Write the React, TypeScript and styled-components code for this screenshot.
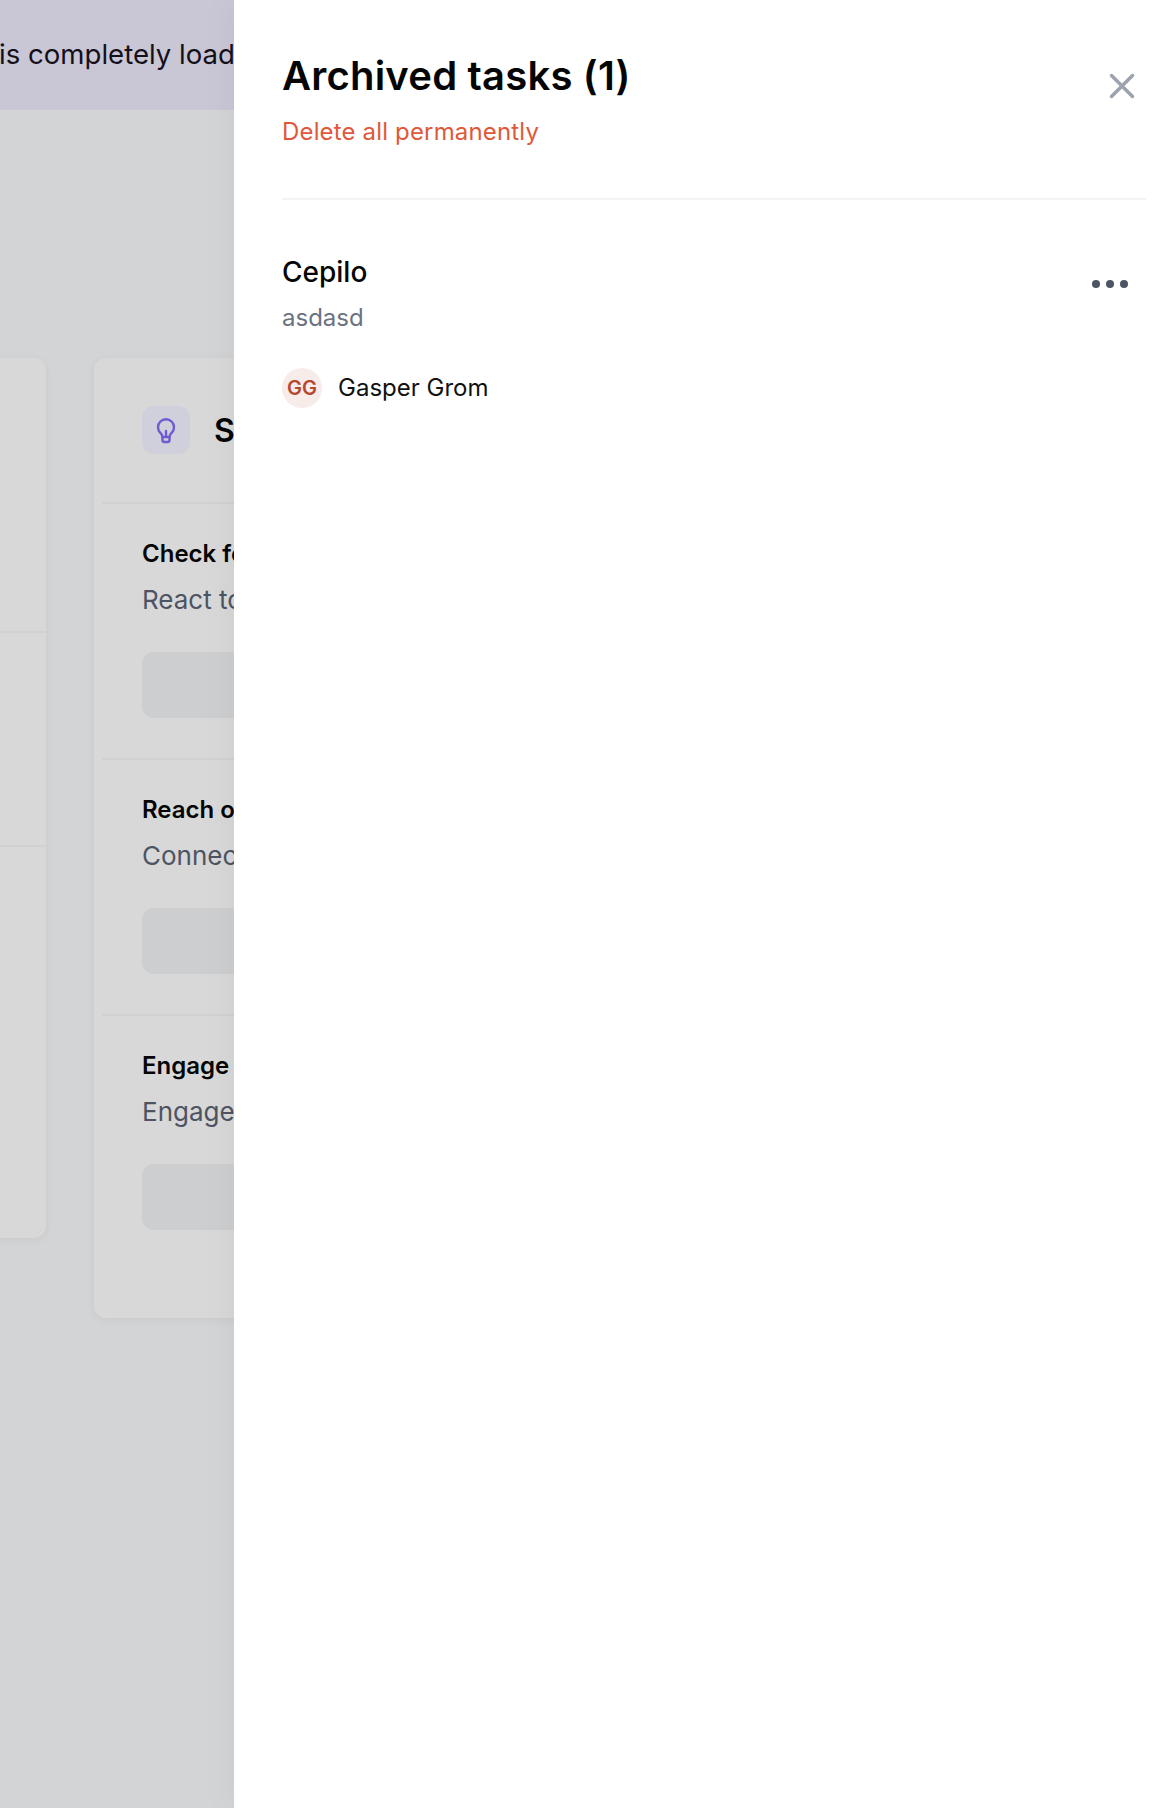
import React from 'react'
import styled, { createGlobalStyle } from 'styled-components'

const GlobalStyle = createGlobalStyle`
  html, body {
    margin: 0;
    padding: 0;
    background: #d3d4d6;
    font-family: "Inter", "Liberation Sans", sans-serif;
  }
  * {
    box-sizing: border-box;
  }
`

const Screen = styled.div`
  display: flex;
  width: 1176px;
  height: 1808px;
  overflow: hidden;
`

const Backdrop = styled.div`
  flex: 0 0 234px;
  height: 100%;
  overflow: hidden;
  background: #d3d4d6;
`

const Banner = styled.div`
  display: flex;
  align-items: center;
  height: 110px;
  padding-bottom: 2px;
  background: #c9c6d6;
  color: #14101a;
  font-size: 27.6px;
  white-space: nowrap;
  overflow: hidden;
`

const BannerText = styled.span`
  margin-left: -1px;
`

const Cards = styled.div`
  display: flex;
  gap: 48px;
  align-items: flex-start;
  margin: 248px 0 0 -254px;
`

const Card = styled.div<{ $height: number; $width: number }>`
  flex: 0 0 ${p => p.$width}px;
  height: ${p => p.$height}px;
  background: #d8d8d8;
  border-radius: 12px;
  box-shadow: 0 2px 10px rgba(0, 0, 0, 0.05);
`

const BlankSection = styled.div<{ $height: number }>`
  height: ${p => p.$height}px;
  border-bottom: 2px solid #d0d1d2;
`

const CardHead = styled.div`
  display: flex;
  align-items: center;
  gap: 24px;
  height: 144px;
  padding: 0 48px;
  white-space: nowrap;
`

const IconBox = styled.div`
  display: flex;
  flex: 0 0 48px;
  align-items: center;
  justify-content: center;
  height: 48px;
  border-radius: 12px;
  background: #d0cfdc;
  color: #6e5bd0;
`

const CardTitle = styled.div`
  color: #050505;
  font-size: 32px;
  font-weight: 600;
`

const Divider = styled.div`
  height: 2px;
  margin: 0 0 0 8px;
  background: #d0d1d2;
`

const Tip = styled.div`
  height: 254px;
  padding: 34px 48px 0;
  white-space: nowrap;
`

const TipTitle = styled.div`
  color: #050505;
  font-size: 24px;
  font-weight: 600;
  line-height: 32px;
`

const TipText = styled.div`
  margin-top: 13px;
  color: #4c5463;
  font-size: 26px;
  line-height: 34px;
`

const TipButton = styled.div`
  height: 66px;
  margin-top: 35px;
  border-radius: 12px;
  background: #cdced0;
`

const Drawer = styled.aside`
  position: relative;
  flex: 1;
  height: 100%;
  padding: 0 30px 0 48px;
  background: #ffffff;
  box-shadow: 0 0 36px rgba(0, 0, 0, 0.05);
`

const DrawerHead = styled.header`
  display: flex;
  align-items: flex-start;
  justify-content: space-between;
  height: 200px;
  padding: 54px 3px 0 0;
  border-bottom: 2px solid #f3f4f6;
`

const Title = styled.h2`
  margin: 0;
  color: #050505;
  font-size: 40px;
  font-weight: 600;
  letter-spacing: 0.2px;
  line-height: 44px;
`

const DeleteAll = styled.button`
  display: block;
  margin: 18px 0 0;
  padding: 0;
  border: 0;
  background: none;
  color: #e0583a;
  font: inherit;
  font-size: 24px;
  letter-spacing: 0.16px;
  line-height: 32px;
`

const CloseButton = styled.button`
  display: flex;
  margin-top: 11px;
  padding: 0;
  border: 0;
  background: none;
  color: #9ca3af;
`

const Task = styled.div`
  display: flex;
  align-items: flex-start;
  justify-content: space-between;
  padding: 54px 16px 0 0;
`

const TaskName = styled.div`
  color: #050505;
  font-size: 28px;
  font-weight: 500;
  line-height: 36px;
`

const TaskNote = styled.div`
  margin-top: 12px;
  color: #6b7280;
  font-size: 24px;
  line-height: 32px;
`

const Owner = styled.div`
  display: flex;
  align-items: center;
  gap: 16px;
  margin-top: 34px;
  color: #111111;
  font-size: 24px;
`

const OwnerName = styled.span`
  margin-top: -2px;
`

const Avatar = styled.div`
  display: flex;
  align-items: center;
  justify-content: center;
  width: 40px;
  height: 40px;
  border-radius: 50%;
  background: #f7ece9;
  color: #b5492f;
  font-size: 20px;
  font-weight: 600;
`

const MoreButton = styled.button`
  display: flex;
  margin-top: 22px;
  padding: 0;
  border: 0;
  background: none;
  color: #4b5563;
`

const tips = [
  { title: 'Check for updates', text: 'React to what is new' },
  { title: 'Reach out', text: 'Connect with people' },
  { title: 'Engage', text: 'Engage with others' },
]

const App: React.FC = () => {
  return (
    <Screen>
      <GlobalStyle />
      <Backdrop>
        <Banner>
          <BannerText>is completely loaded</BannerText>
        </Banner>
        <Cards>
          <Card $width={300} $height={880}>
            <BlankSection $height={275} />
            <BlankSection $height={214} />
          </Card>
          <Card $width={400} $height={960}>
            <CardHead>
              <IconBox>
                <svg width="24" height="28" viewBox="0 -1 24 28" fill="none" stroke="currentColor" strokeWidth="2.4" strokeLinecap="round" strokeLinejoin="round">
                  <path d="M8.5 20c0-2-1-3-2.3-4.3a8 8 0 1 1 11.6 0C16.5 17 15.5 18 15.5 20" />
                  <path d="M12 14v6M8.5 20h7v3a2 2 0 0 1-2 2h-3a2 2 0 0 1-2-2z" />
                </svg>
              </IconBox>
              <CardTitle>Suggestions</CardTitle>
            </CardHead>
            {tips.map(tip => (
              <React.Fragment key={tip.title}>
                <Divider />
                <Tip>
                  <TipTitle>{tip.title}</TipTitle>
                  <TipText>{tip.text}</TipText>
                  <TipButton />
                </Tip>
              </React.Fragment>
            ))}
          </Card>
        </Cards>
      </Backdrop>
      <Drawer>
        <DrawerHead>
          <div>
            <Title>Archived tasks (1)</Title>
            <DeleteAll>Delete all permanently</DeleteAll>
          </div>
          <CloseButton aria-label="Close">
            <svg width="42" height="42" viewBox="0 0 24 24" fill="none" stroke="currentColor" strokeWidth="2" strokeLinecap="round">
              <path d="M6 18L18 6M6 6l12 12" />
            </svg>
          </CloseButton>
        </DrawerHead>
        <Task>
          <div>
            <TaskName>Cepilo</TaskName>
            <TaskNote>asdasd</TaskNote>
            <Owner>
              <Avatar>GG</Avatar>
              <OwnerName>Gasper Grom</OwnerName>
            </Owner>
          </div>
          <MoreButton aria-label="More">
            <svg width="40" height="16" viewBox="0 0 40 16" fill="currentColor">
              <circle cx="6" cy="8" r="4" />
              <circle cx="20" cy="8" r="4" />
              <circle cx="34" cy="8" r="4" />
            </svg>
          </MoreButton>
        </Task>
      </Drawer>
    </Screen>
  )
}

export default App
